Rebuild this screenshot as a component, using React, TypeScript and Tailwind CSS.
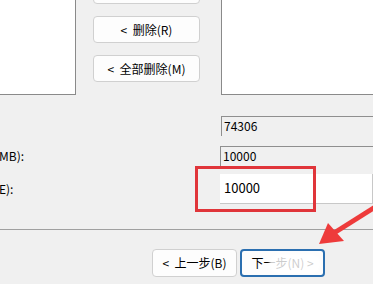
export default function App() {
  const font = { fontFamily: '"Noto Sans CJK SC", "Noto Sans", sans-serif' };
  return (
    <div
      className="relative w-[373px] h-[284px] overflow-hidden bg-[#f0f0f0] text-[12px] text-black"
      style={font}
    >
      {/* list boxes + move buttons */}
      <div className="flex h-[95px]">
        <div className="w-[76px] bg-white border-r border-b border-[#8a8a8a]" />
        <div className="flex-1 flex flex-col gap-[12px] pl-[17px] -mt-[23px]">
          <button className="w-[107px] h-[27px] shrink-0 rounded-[4px] border border-[#d0d0d0] bg-[#fdfdfd]" />
          <button className="w-[107px] h-[27px] shrink-0 rounded-[4px] border border-[#d0d0d0] bg-[#fdfdfd] leading-none">
            &lt;&nbsp;&nbsp;删除(R)
          </button>
          <button className="w-[107px] h-[27px] shrink-0 rounded-[4px] border border-[#d0d0d0] bg-[#fdfdfd] leading-none">
            &lt;&nbsp;&nbsp;全部删除(M)
          </button>
        </div>
        <div className="w-[152px] bg-white border-l border-b border-[#8a8a8a]" />
      </div>

      {/* size fields */}
      <div className="flex flex-col mt-[21px]">
        <div className="flex items-center h-[20px]">
          <span className="w-[221px]" />
          <div className="flex-1 h-[20px] border-t border-l border-[#8f8f8f] pl-[2px] leading-[18px]">74306</div>
        </div>
        <div className="flex items-center h-[20px] mt-[10px]">
          <span className="w-[221px] -ml-[1px]">MB):</span>
          <div className="flex-1 h-[20px] border-t border-l border-[#8f8f8f] pl-[2px] leading-[18px]">10000</div>
        </div>
        <div className="flex items-center h-[30px] mt-[8px]">
          <span className="w-[221px] -ml-[1px]">E):</span>
          <div className="flex-1 h-[30px] bg-white border-r border-b border-[#c8c8c8] pl-[4px] leading-[28px] text-[13px]">
            10000
          </div>
        </div>
      </div>

      {/* separator */}
      <div className="mt-[25px] h-px bg-[#a0a0a0]" />

      {/* wizard buttons */}
      <div className="flex gap-[3px] pl-[152px] mt-[19px]">
        <button className="w-[85px] h-[28px] rounded-[4px] border border-[#d0d0d0] bg-[#fdfdfd] leading-none">
          &lt;&nbsp;&nbsp;上一步(B)
        </button>
        <button className="relative w-[85px] h-[28px] rounded-[4px] border-2 border-[#2b6fb0] bg-[#fdfdfd] leading-none overflow-hidden">
          下一步(N)&nbsp;&gt;
          <span className="absolute right-[2px] top-[3px] w-[52px] h-[20px] rounded-full bg-white/80 blur-[1px]" />
        </button>
      </div>

      {/* red annotation box */}
      <div className="absolute left-[195px] top-[166px] w-[121px] h-[46px] border-[3px] border-[#e0353a]" />

      {/* red arrow */}
      <svg className="absolute left-0 top-0" width="373" height="284" viewBox="0 0 373 284">
        <line x1="380" y1="204" x2="334" y2="233" stroke="#ee3b3b" strokeWidth="5" />
        <polygon points="319,244 328,223 344,241" fill="#ee3b3b" />
      </svg>
    </div>
  );
}
